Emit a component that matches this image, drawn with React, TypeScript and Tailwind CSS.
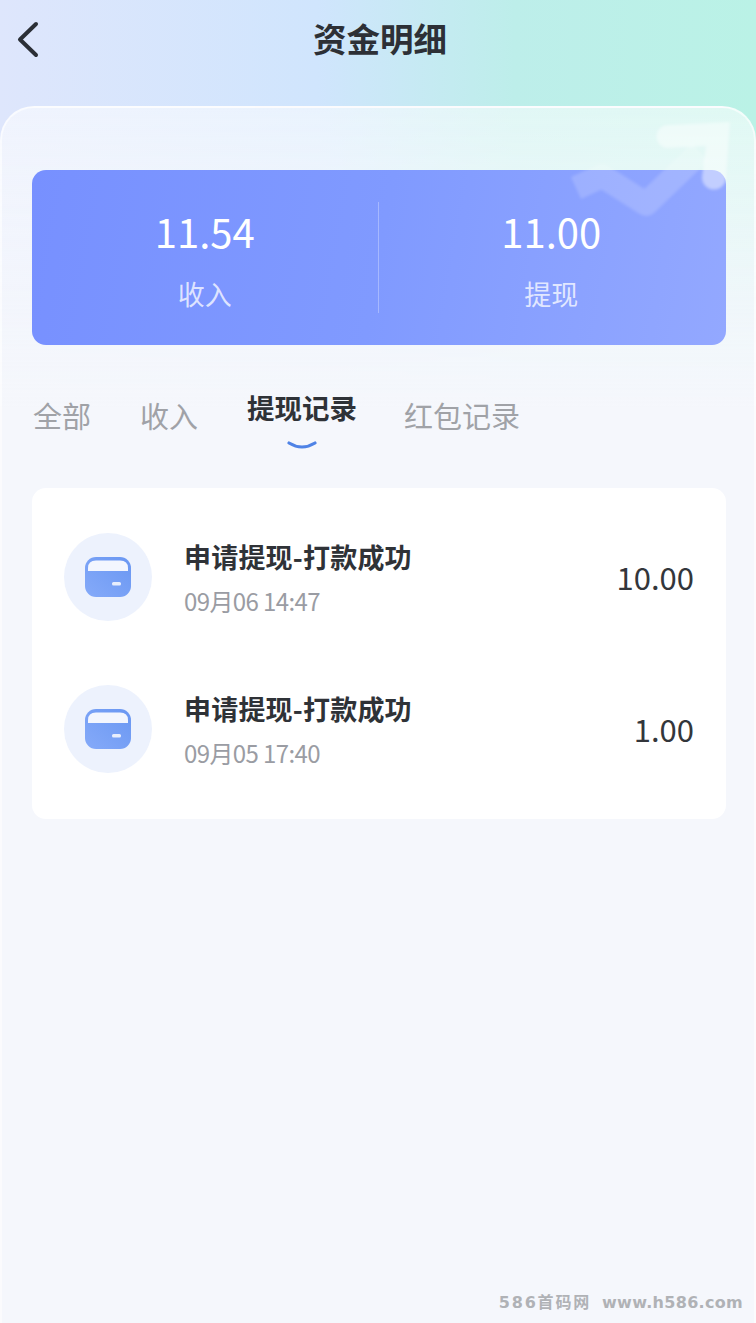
const cjk = "font-['Noto_Sans_CJK_SC','Noto_Sans',sans-serif]";

function BackIcon() {
  return (
    <svg width="24" height="38" viewBox="0 0 24 38" fill="none">
      <path d="M20 3 L4 18.5 L20 34" stroke="#2b2f36" strokeWidth="4" strokeLinecap="round" strokeLinejoin="round" />
    </svg>
  );
}

function CardIcon() {
  return (
    <svg width="46" height="40" viewBox="0 0 46 40" fill="none">
      <defs>
        <linearGradient id="cardFill" x1="0" y1="1" x2="1" y2="0">
          <stop offset="0" stopColor="#85aaf9" />
          <stop offset="1" stopColor="#6a97f2" />
        </linearGradient>
      </defs>
      <rect x="0" y="0" width="46" height="40" rx="11" fill="url(#cardFill)" />
      <path d="M3 14 V11 Q3 3.5 11 3.5 H35 Q43 3.5 43 11 V14 Z" fill="#f3f6fe" />
      <rect x="27" y="25" width="9" height="3.5" rx="1.5" fill="#e8eefc" />
    </svg>
  );
}

function Arrow() {
  return (
    <svg className="absolute left-[560px] top-[110px] pointer-events-none blur-[1.5px]" width="190" height="120" viewBox="0 0 190 120" fill="none">
      <path d="M16 78 L42 66 L86 94 L140 42" stroke="#ffffff" strokeOpacity="0.17" strokeWidth="24" strokeLinejoin="round" />
      <path d="M108 15 L170 12 L166 68 a12 12 0 0 1 -24 -1 L146 36 L108 38 a11.5 11.5 0 0 1 0 -23 Z" fill="#ffffff" fillOpacity="0.45" />
    </svg>
  );
}

function Stat({ value, label }: { value: string; label: string }) {
  return (
    <div className="flex-1 flex flex-col items-center text-white">
      <div className="text-[40px] leading-[48px] mt-[37px]">{value}</div>
      <div className="text-[27px] leading-[36px] mt-[21px] text-white/75">{label}</div>
    </div>
  );
}

function Row({ title, time, amount }: { title: string; time: string; amount: string }) {
  return (
    <div className="flex items-center">
      <div className="w-[88px] h-[88px] rounded-full bg-[#edf2fd] flex items-center justify-center">
        <CardIcon />
      </div>
      <div className="ml-[32px] flex-1">
        <div className="text-[27px] leading-[36px] mt-[2px] font-bold text-[#2f3237] tracking-[0.2px]">{title}</div>
        <div className="text-[24px] leading-[34px] mt-[9px] text-[#9a9ca3] tracking-[-0.6px]">{time}</div>
      </div>
      <div className="text-[31px] leading-[40px] text-[#33363b]">{amount}</div>
    </div>
  );
}

export default function App() {
  return (
    <div className={`${cjk} relative w-[756px] h-[1323px] overflow-hidden bg-[linear-gradient(90deg,#dee6fc_0%,#d0e5fd_42%,#bdeeea_68%,#baf2e6_100%)]`}>
      <header className="h-[106px] grid grid-cols-[1fr_auto_1fr] items-start pt-[15px] pl-[16px] pr-[12px]">
        <div className="pt-[6px]"><BackIcon /></div>
        <h1 className="text-[33.5px] leading-[46px] font-bold text-[#2d3036]">资金明细</h1>
        <div />
      </header>
      <main className="h-[1217px] rounded-t-[34px] border-t-2 border-x-2 border-white/60 bg-[linear-gradient(180deg,rgba(255,255,255,0.55)_0px,rgba(245,247,252,0.9)_190px,#f5f7fc_300px)] pl-[30px] pr-[28px] pt-[62px]">
        <section className="h-[175px] pr-[2px] rounded-[14px] flex bg-[linear-gradient(100deg,#7790ff_0%,#809aff_50%,#93a8ff_100%)]">
          <Stat value="11.54" label="收入" />
          <div className="w-px h-[111px] mt-[32px] bg-white/30" />
          <Stat value="11.00" label="提现" />
        </section>
        <nav className="h-[143px] flex items-start text-[29px] text-[#a0a2a7]">
          <div className="leading-[40px] mt-[50px] ml-[1px]">全部</div>
          <div className="leading-[40px] mt-[50px] ml-[49px]">收入</div>
          <div className="ml-[49px] mt-[42px] flex flex-col items-center">
            <div className="text-[27.5px] leading-[40px] font-bold text-[#2f3237]">提现记录</div>
            <svg className="mt-[14px]" width="30" height="10" viewBox="0 0 30 10" fill="none">
              <path d="M2 2 Q15 10 28 2" stroke="#4f83e6" strokeWidth="3.2" strokeLinecap="round" />
            </svg>
          </div>
          <div className="leading-[40px] mt-[50px] ml-[47px]">红包记录</div>
        </nav>
        <section className="rounded-[14px] bg-white px-[32px] pt-[45px] pb-[46px] flex flex-col gap-[64px]">
          <Row title="申请提现-打款成功" time="09月06 14:47" amount="10.00" />
          <Row title="申请提现-打款成功" time="09月05 17:40" amount="1.00" />
        </section>
      </main>
      <Arrow />
      <div className="absolute right-[13px] bottom-[10px] flex gap-[11px] font-bold text-[#b0b2b6] text-[16px] leading-[20px] font-['DejaVu_Sans','Noto_Sans_CJK_SC',sans-serif]">
        <span className="tracking-[1.8px]">586首码网</span>
        <span className="tracking-[0.3px]">www.h586.com</span>
      </div>
    </div>
  );
}
